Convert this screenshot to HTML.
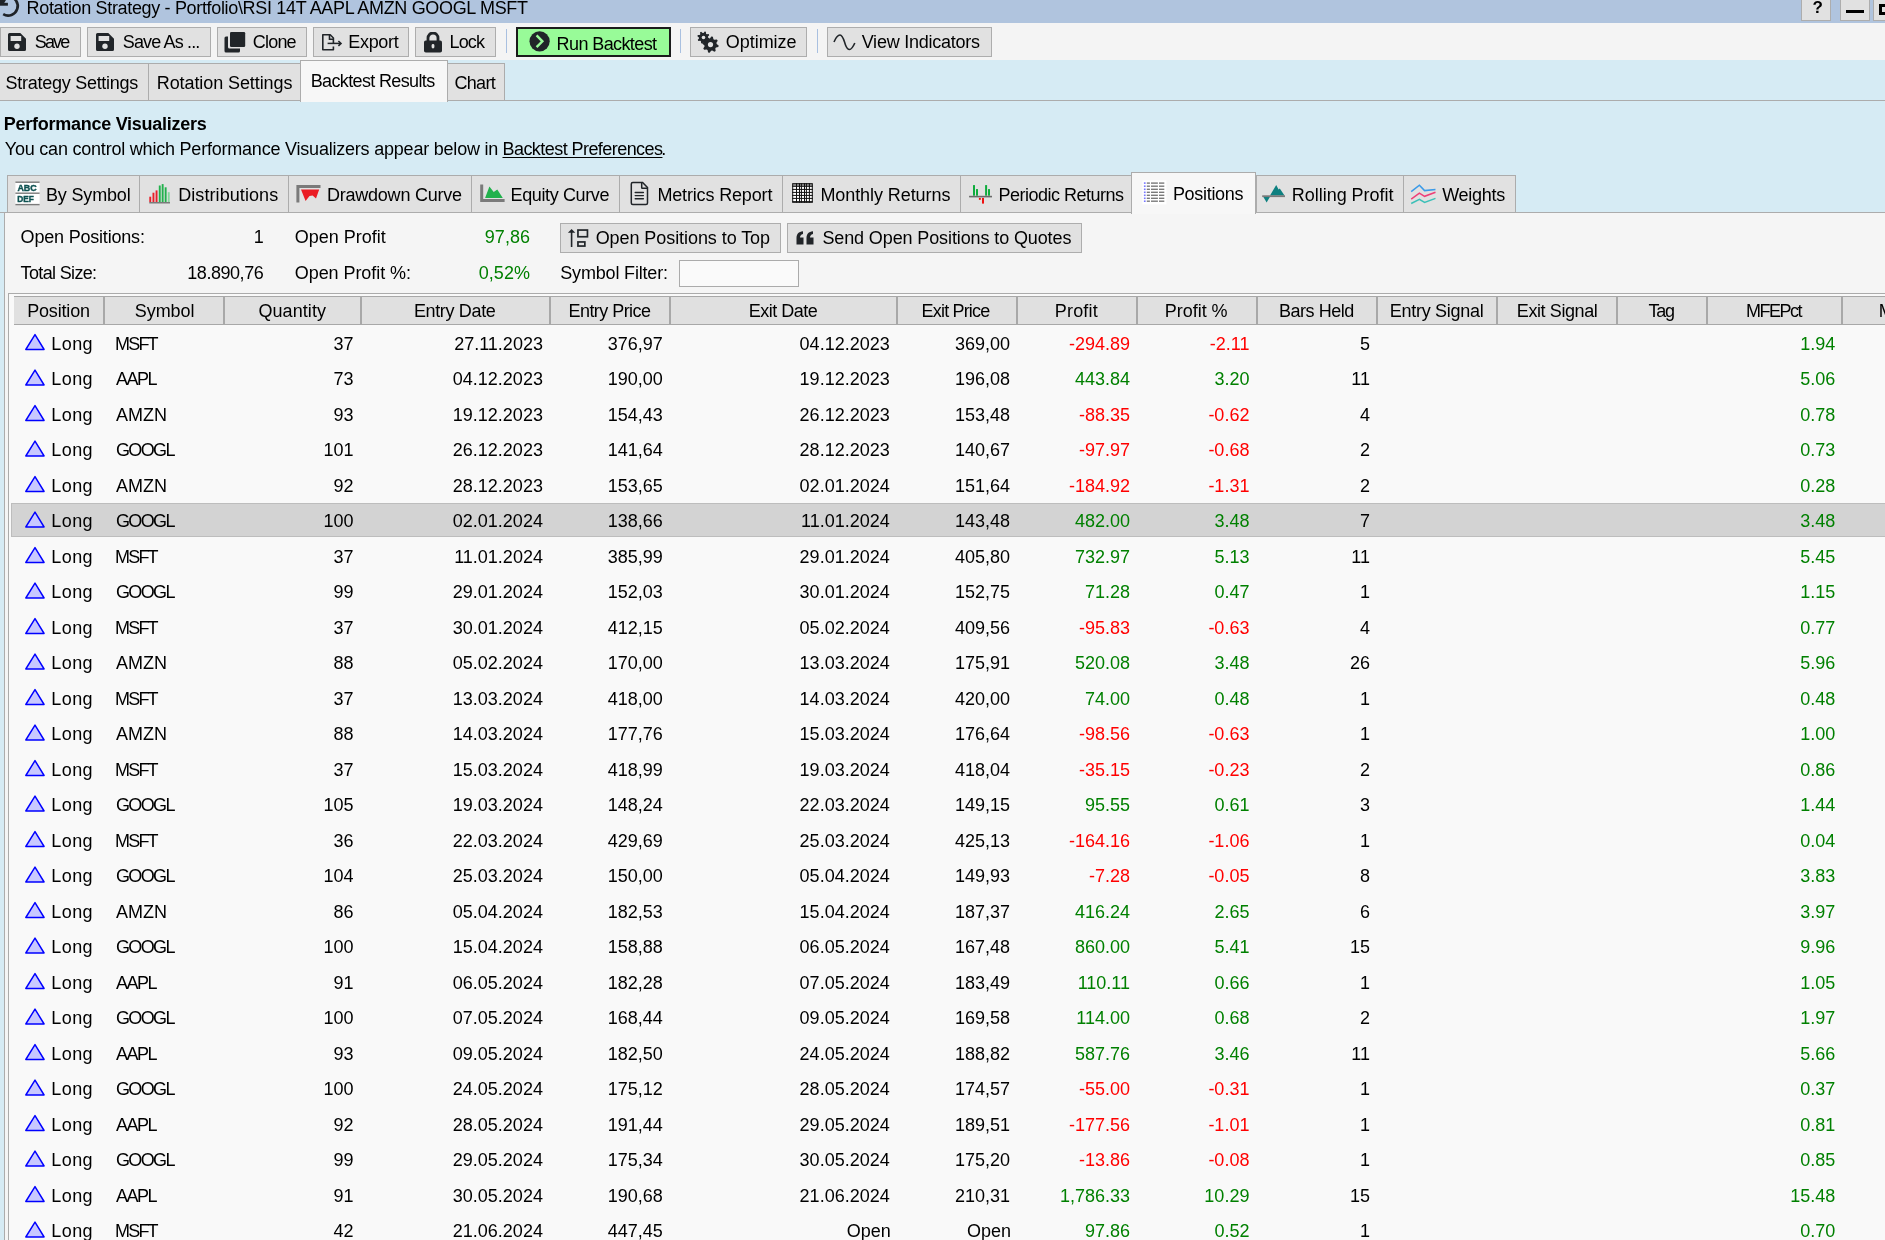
<!DOCTYPE html>
<html><head><meta charset="utf-8"><title>Rotation Strategy</title>
<style>
html,body{margin:0;padding:0;}
body{width:1885px;height:1240px;overflow:hidden;position:relative;font-family:"Liberation Sans", sans-serif;font-size:18px;color:#000;background:#D6EBF4;}
u{text-decoration:underline;text-underline-offset:2px;}
</style></head><body>
<div style="position:absolute;left:0;top:0;width:1885px;height:1240px;will-change:transform">
<div style="position:absolute;left:0px;top:0px;width:1885px;height:23px;background:#B0C4DE"></div>
<svg style="position:absolute;left:0px;top:0px;overflow:visible" width="24" height="23" viewBox="0 0 24 23"><path d="M3.2 14.2 A9.6 9.6 0 1 0 9 -3.6" fill="none" stroke="#1f2328" stroke-width="2.7"/><rect x="0" y="2.8" width="7.9" height="2.9" fill="#1f2328"/><path d="M0 0 H6 L4.2 2.9 H0 Z" fill="#1f2328"/></svg>
<div style="position:absolute;left:1801px;top:-2px;width:30px;height:23px;background:#E1E1E1;border:1px solid #ADADAD;box-sizing:border-box"></div>
<div style="position:absolute;left:1840px;top:-2px;width:30px;height:23px;background:#E1E1E1;border:1px solid #ADADAD;box-sizing:border-box"></div>
<div style="position:absolute;left:1846px;top:10px;width:18px;height:3px;background:#000"></div>
<div style="position:absolute;left:1873px;top:-2px;width:30px;height:23px;background:#E1E1E1;border:1px solid #ADADAD;box-sizing:border-box"></div>
<div style="position:absolute;left:1879px;top:4px;width:12px;height:11px;border:3px solid #000;box-sizing:border-box"></div>
<div style="position:absolute;left:0px;top:23px;width:1885px;height:37px;background:#F4F4F4"></div>
<div style="position:absolute;left:0px;top:27px;width:81px;height:30px;background:#E1E1E1;border:1px solid #ADADAD;box-sizing:border-box"></div>
<div style="position:absolute;left:87px;top:27px;width:124px;height:30px;background:#E1E1E1;border:1px solid #ADADAD;box-sizing:border-box"></div>
<div style="position:absolute;left:217px;top:27px;width:90px;height:30px;background:#E1E1E1;border:1px solid #ADADAD;box-sizing:border-box"></div>
<div style="position:absolute;left:313px;top:27px;width:96px;height:30px;background:#E1E1E1;border:1px solid #ADADAD;box-sizing:border-box"></div>
<div style="position:absolute;left:415px;top:27px;width:81px;height:30px;background:#E1E1E1;border:1px solid #ADADAD;box-sizing:border-box"></div>
<div style="position:absolute;left:516px;top:27px;width:155px;height:30px;background:#98FB98;border:2px solid #1b1b1b;box-sizing:border-box"></div>
<div style="position:absolute;left:690px;top:27px;width:117px;height:30px;background:#E1E1E1;border:1px solid #ADADAD;box-sizing:border-box"></div>
<div style="position:absolute;left:827px;top:27px;width:165px;height:30px;background:#E1E1E1;border:1px solid #ADADAD;box-sizing:border-box"></div>
<div style="position:absolute;left:506px;top:29px;width:1px;height:24px;background:#A9C0E0"></div>
<div style="position:absolute;left:680px;top:29px;width:1px;height:24px;background:#A9C0E0"></div>
<div style="position:absolute;left:817px;top:29px;width:1px;height:24px;background:#A9C0E0"></div>
<svg style="position:absolute;left:8px;top:33px" width="18" height="18" viewBox="0 0 18 18"><path d="M1.5 0 H12.3 L18 5.7 V16.5 A1.5 1.5 0 0 1 16.5 18 H1.5 A1.5 1.5 0 0 1 0 16.5 V1.5 A1.5 1.5 0 0 1 1.5 0 Z" fill="#212529"/><rect x="2.6" y="3" width="10.6" height="5" fill="#E1E1E1"/><circle cx="9" cy="13.2" r="2.7" fill="#E1E1E1"/></svg>
<svg style="position:absolute;left:96px;top:33px" width="18" height="18" viewBox="0 0 18 18"><path d="M1.5 0 H12.3 L18 5.7 V16.5 A1.5 1.5 0 0 1 16.5 18 H1.5 A1.5 1.5 0 0 1 0 16.5 V1.5 A1.5 1.5 0 0 1 1.5 0 Z" fill="#212529"/><rect x="2.6" y="3" width="10.6" height="5" fill="#E1E1E1"/><circle cx="9" cy="13.2" r="2.7" fill="#E1E1E1"/></svg>
<svg style="position:absolute;left:224px;top:31px" width="22" height="22" viewBox="0 0 22 22"><path d="M0.5 7 A1.5 1.5 0 0 1 2 5.5 H4 V16 A1.5 1.5 0 0 0 5.5 17.5 H16 V20 A1.5 1.5 0 0 1 14.5 21.5 H2 A1.5 1.5 0 0 1 0.5 20 Z" fill="#212529"/><rect x="6" y="1" width="15.2" height="15" rx="1.3" fill="#212529"/></svg>
<svg style="position:absolute;left:316px;top:30px;overflow:visible" width="30" height="24" viewBox="316 30 30 24"><path d="M333.4 43.2 V38 L330.2 34.8 H322.8 V49.7 H333.4 V46.5" fill="none" stroke="#212529" stroke-width="1.6" stroke-linejoin="round"/><path d="M329.5 34.8 V39.2 H333.4" fill="none" stroke="#212529" stroke-width="1.6"/><path d="M327.6 43.4 H340" stroke="#212529" stroke-width="1.5"/><path d="M338.4 41 L341 43.4 L338.4 45.8" fill="none" stroke="#212529" stroke-width="1.6"/></svg>
<svg style="position:absolute;left:423px;top:32px" width="20" height="21" viewBox="0 0 20 21"><path d="M5 9 V6 A5 5 0 0 1 15 6 V9" fill="none" stroke="#212529" stroke-width="2.8"/><rect x="1" y="8.5" width="18" height="12" rx="1.8" fill="#212529"/><rect x="8.6" y="12" width="2.8" height="4.5" rx="1.4" fill="#E1E1E1"/></svg>
<svg style="position:absolute;left:529px;top:31px" width="22" height="22" viewBox="0 0 22 22"><circle cx="10.6" cy="10.3" r="10.1" fill="#212529"/><path d="M7.6 4.4 L13.4 10.3 L7.6 16.2" fill="none" stroke="#98FB98" stroke-width="2.4"/></svg>
<svg style="position:absolute;left:697px;top:31px" width="23" height="22" viewBox="0 0 23 22"><polygon points="12.58,7.73 12.22,8.89 10.32,9.07 9.74,9.76 9.93,11.67 8.85,12.24 7.38,11.01 6.48,11.10 5.27,12.58 4.11,12.22 3.93,10.32 3.24,9.74 1.33,9.93 0.76,8.85 1.99,7.38 1.90,6.48 0.42,5.27 0.78,4.11 2.68,3.93 3.26,3.24 3.07,1.33 4.15,0.76 5.62,1.99 6.52,1.90 7.73,0.42 8.89,0.78 9.07,2.68 9.76,3.26 11.67,3.07 12.24,4.15 11.01,5.62 11.10,6.52" fill="#212529"/><circle cx="6.5" cy="6.5" r="1.8" fill="#E1E1E1"/><polygon points="21.66,14.42 21.34,15.99 18.96,16.53 18.29,17.54 18.69,19.95 17.35,20.84 15.29,19.54 14.10,19.77 12.68,21.76 11.11,21.44 10.57,19.06 9.56,18.39 7.15,18.79 6.26,17.45 7.56,15.39 7.33,14.20 5.34,12.78 5.66,11.21 8.04,10.67 8.71,9.66 8.31,7.25 9.65,6.36 11.71,7.66 12.90,7.43 14.32,5.44 15.89,5.76 16.43,8.14 17.44,8.81 19.85,8.41 20.74,9.75 19.44,11.81 19.67,13.00" fill="#212529"/><circle cx="13.5" cy="13.6" r="2.6" fill="#E1E1E1"/></svg>
<svg style="position:absolute;left:833px;top:33px" width="24" height="18" viewBox="0 0 24 18"><path d="M1 9 C3 4, 5 2, 7 2 C10 2, 11 8, 12.5 12 C14 16, 15 16.5, 16.5 16.5 C18.5 16.5, 20 14, 21.8 10" fill="none" stroke="#212529" stroke-width="1.6"/></svg>
<div style="position:absolute;left:0px;top:60px;width:1885px;height:1180px;background:#D6EBF4"></div>
<div style="position:absolute;left:0px;top:100px;width:1885px;height:1px;background:#ACACAC"></div>
<div style="position:absolute;left:-1px;top:63px;width:150px;height:38px;background:#E1E1E1;border:1px solid #ACACAC;border-bottom:1px solid #ACACAC;box-sizing:border-box"></div>
<div style="position:absolute;left:148px;top:63px;width:153px;height:38px;background:#E1E1E1;border:1px solid #ACACAC;border-bottom:1px solid #ACACAC;box-sizing:border-box"></div>
<div style="position:absolute;left:447px;top:63px;width:58px;height:38px;background:#E1E1E1;border:1px solid #ACACAC;border-bottom:1px solid #ACACAC;box-sizing:border-box"></div>
<div style="position:absolute;left:300px;top:60px;width:148px;height:42px;background:#F7F7F7;border:1px solid #ACACAC;border-bottom:none;box-sizing:border-box"></div>
<div style="position:absolute;left:0px;top:212px;width:1885px;height:1px;background:#ACACAC"></div>
<div style="position:absolute;left:7px;top:175px;width:133px;height:38px;background:#E1E1E1;border:1px solid #ACACAC;border-bottom:1px solid #ACACAC;box-sizing:border-box"></div>
<div style="position:absolute;left:139px;top:175px;width:150px;height:38px;background:#E1E1E1;border:1px solid #ACACAC;border-bottom:1px solid #ACACAC;box-sizing:border-box"></div>
<div style="position:absolute;left:288px;top:175px;width:184px;height:38px;background:#E1E1E1;border:1px solid #ACACAC;border-bottom:1px solid #ACACAC;box-sizing:border-box"></div>
<div style="position:absolute;left:471px;top:175px;width:149px;height:38px;background:#E1E1E1;border:1px solid #ACACAC;border-bottom:1px solid #ACACAC;box-sizing:border-box"></div>
<div style="position:absolute;left:619px;top:175px;width:164px;height:38px;background:#E1E1E1;border:1px solid #ACACAC;border-bottom:1px solid #ACACAC;box-sizing:border-box"></div>
<div style="position:absolute;left:782px;top:175px;width:179px;height:38px;background:#E1E1E1;border:1px solid #ACACAC;border-bottom:1px solid #ACACAC;box-sizing:border-box"></div>
<div style="position:absolute;left:960px;top:175px;width:172px;height:38px;background:#E1E1E1;border:1px solid #ACACAC;border-bottom:1px solid #ACACAC;box-sizing:border-box"></div>
<div style="position:absolute;left:1256px;top:175px;width:148px;height:38px;background:#E1E1E1;border:1px solid #ACACAC;border-bottom:1px solid #ACACAC;box-sizing:border-box"></div>
<div style="position:absolute;left:1403px;top:175px;width:113px;height:38px;background:#E1E1E1;border:1px solid #ACACAC;border-bottom:1px solid #ACACAC;box-sizing:border-box"></div>
<div style="position:absolute;left:4px;top:212px;width:1881px;height:1028px;background:#F5F5F5;border-left:1px solid #ACACAC;border-top:1px solid #ACACAC;box-sizing:border-box"></div>
<div style="position:absolute;left:1131px;top:172px;width:125px;height:42px;background:#F7F7F7;border:1px solid #ACACAC;border-bottom:none;box-sizing:border-box"></div>
<svg style="position:absolute;left:12px;top:178px;overflow:visible" width="30" height="30" viewBox="12 178 30 30"><rect x="15.4" y="182.2" width="24.2" height="22.4" fill="#fff"/><rect x="15.4" y="181.5" width="24.2" height="1.4" fill="#7a7a7a"/><rect x="15.4" y="192.5" width="24.2" height="1.4" fill="#7a7a7a"/><rect x="15.4" y="203.9" width="24.2" height="1.4" fill="#7a7a7a"/><text x="17.4" y="191.4" textLength="19.3" lengthAdjust="spacingAndGlyphs" font-family="Liberation Sans" font-weight="bold" font-size="9.8" fill="#0f5252" stroke="#0f5252" stroke-width="0.45">ABC</text><text x="17.3" y="201.9" textLength="16.6" lengthAdjust="spacingAndGlyphs" font-family="Liberation Sans" font-weight="bold" font-size="9.8" fill="#0f5252" stroke="#0f5252" stroke-width="0.45">DEF</text></svg>
<svg style="position:absolute;left:145px;top:180px;overflow:visible" width="30" height="28" viewBox="145 180 30 28"><rect x="149.3" y="196.7" width="1.9" height="5.5" fill="#e8202a"/><rect x="152.5" y="192.7" width="1.9" height="9.5" fill="#e8202a"/><rect x="155.6" y="190.4" width="1.9" height="11.8" fill="#e8202a"/><rect x="158.8" y="185.5" width="1.9" height="16.7" fill="#22b14c"/><rect x="161.7" y="184.1" width="1.9" height="18.1" fill="#22b14c"/><rect x="164.7" y="187.3" width="1.9" height="14.9" fill="#22b14c"/><rect x="167.8" y="192.2" width="1.9" height="10.0" fill="#86d69c"/><rect x="149.3" y="202" width="20.7" height="1.5" fill="#7a7a7a"/></svg>
<svg style="position:absolute;left:293px;top:182px;overflow:visible" width="30" height="24" viewBox="293 182 30 24"><path d="M297.9 202.6 V186.6 H320.5" fill="none" stroke="#7a7a7a" stroke-width="3"/><path d="M301 189.6 H319.2 L316 198.6 L312.6 195.6 L309.5 196 L305.6 201 Z" fill="#ea1c24"/></svg>
<svg style="position:absolute;left:478px;top:182px;overflow:visible" width="30" height="24" viewBox="478 182 30 24"><path d="M481.7 184.5 V200.4 H504.6" fill="none" stroke="#7a7a7a" stroke-width="3"/><path d="M485.1 198 L489.4 186.4 L493.7 191.9 L497.3 189.4 L502.8 198 Z" fill="#22b14c"/></svg>
<svg style="position:absolute;left:626px;top:178px;overflow:visible" width="30" height="30" viewBox="626 178 30 30"><path d="M632.8 182.4 H642.6 L647.5 187.6 V202.9 A1.5 1.5 0 0 1 646 204.4 H632.8 A1.5 1.5 0 0 1 631.3 202.9 V183.9 A1.5 1.5 0 0 1 632.8 182.4 Z" fill="none" stroke="#212529" stroke-width="1.5"/><path d="M641.7 182.4 V187.8 A0.5 0.5 0 0 0 642.2 188.3 H647.5" fill="none" stroke="#212529" stroke-width="1.5"/><path d="M635.2 192.5 H643.4 M635.2 195.6 H643.4 M635.2 198.7 H643.4" stroke="#212529" stroke-width="1.4" stroke-linecap="round"/></svg>
<svg style="position:absolute;left:788px;top:178px;overflow:visible" width="30" height="30" viewBox="788 178 30 30"><rect x="792.2" y="183.2" width="20.6" height="19.4" fill="#fff"/><rect x="792.2" y="183.2" width="20.6" height="3.2" fill="#9a9a9a"/><rect x="796.0" y="183.2" width="1" height="19.4" fill="#111"/><rect x="799.0" y="183.2" width="1" height="19.4" fill="#111"/><rect x="800.9" y="183.2" width="1" height="19.4" fill="#111"/><rect x="804.0" y="183.2" width="1" height="19.4" fill="#111"/><rect x="805.9" y="183.2" width="1" height="19.4" fill="#111"/><rect x="808.9" y="183.2" width="1" height="19.4" fill="#111"/><rect x="792.2" y="185.8" width="20.6" height="1" fill="#111"/><rect x="792.2" y="188.9" width="20.6" height="1" fill="#111"/><rect x="792.2" y="191.9" width="20.6" height="1" fill="#111"/><rect x="792.2" y="194.9" width="20.6" height="1" fill="#111"/><rect x="792.2" y="197.9" width="20.6" height="1" fill="#111"/><rect x="792.7" y="183.7" width="19.6" height="18.4" fill="none" stroke="#111" stroke-width="1"/><rect x="792.2" y="201.2" width="20.6" height="1.4" fill="#111"/></svg>
<svg style="position:absolute;left:966px;top:180px;overflow:visible" width="30" height="30" viewBox="966 180 30 30"><rect x="973" y="185.1" width="2" height="10.6" fill="#0eac3c"/><rect x="976" y="189.1" width="2" height="6.6" fill="#0eac3c"/><rect x="985.1" y="185.1" width="2" height="10.6" fill="#0eac3c"/><rect x="988" y="189.1" width="2" height="6.6" fill="#0eac3c"/><rect x="969.1" y="195.8" width="22.9" height="1.6" fill="#6a6a6a"/><rect x="978.9" y="197.9" width="1.9" height="1.9" fill="#ee1111"/><rect x="982" y="197.9" width="2" height="5.7" fill="#ee1111"/></svg>
<svg style="position:absolute;left:1140px;top:178px;overflow:visible" width="30" height="30" viewBox="1140 178 30 30"><rect x="1142.4" y="180.4" width="24" height="24" fill="#fff"/><rect x="1143.9" y="182.3" width="1.7" height="1.6" fill="#7777ff"/><rect x="1146.8" y="182.4" width="3.1" height="1.4" fill="#7a7a7a"/><rect x="1151" y="182.4" width="6.9" height="1.4" fill="#7a7a7a"/><rect x="1159" y="182.4" width="5.3" height="1.4" fill="#7a7a7a"/><rect x="1143.9" y="185.4" width="1.7" height="1.6" fill="#7777ff"/><rect x="1146.8" y="185.5" width="3.1" height="1.4" fill="#7a7a7a"/><rect x="1151" y="185.5" width="6.9" height="1.4" fill="#7a7a7a"/><rect x="1159" y="185.5" width="5.3" height="1.4" fill="#7a7a7a"/><rect x="1143.9" y="188.5" width="1.7" height="1.6" fill="#7777ff"/><rect x="1146.8" y="188.6" width="3.1" height="1.4" fill="#7a7a7a"/><rect x="1151" y="188.6" width="6.9" height="1.4" fill="#7a7a7a"/><rect x="1159" y="188.6" width="5.3" height="1.4" fill="#7a7a7a"/><rect x="1143.9" y="191.5" width="1.7" height="1.6" fill="#7777ff"/><rect x="1146.8" y="191.6" width="3.1" height="1.4" fill="#7a7a7a"/><rect x="1151" y="191.6" width="6.9" height="1.4" fill="#7a7a7a"/><rect x="1159" y="191.6" width="5.3" height="1.4" fill="#7a7a7a"/><rect x="1143.9" y="194.5" width="1.7" height="1.6" fill="#7777ff"/><rect x="1146.8" y="194.6" width="3.1" height="1.4" fill="#7a7a7a"/><rect x="1151" y="194.6" width="6.9" height="1.4" fill="#7a7a7a"/><rect x="1159" y="194.6" width="5.3" height="1.4" fill="#7a7a7a"/><rect x="1143.9" y="197.5" width="1.7" height="1.6" fill="#7777ff"/><rect x="1146.8" y="197.6" width="3.1" height="1.4" fill="#7a7a7a"/><rect x="1151" y="197.6" width="6.9" height="1.4" fill="#7a7a7a"/><rect x="1159" y="197.6" width="5.3" height="1.4" fill="#7a7a7a"/><rect x="1143.9" y="200.4" width="1.7" height="1.6" fill="#7777ff"/><rect x="1146.8" y="200.5" width="3.1" height="1.4" fill="#7a7a7a"/><rect x="1151" y="200.5" width="6.9" height="1.4" fill="#7a7a7a"/><rect x="1159" y="200.5" width="5.3" height="1.4" fill="#7a7a7a"/></svg>
<svg style="position:absolute;left:1258px;top:180px;overflow:visible" width="32" height="26" viewBox="1258 180 32 26"><path d="M1270 195.6 L1276.2 184.9 L1278.6 189.5 L1279.8 188.4 L1284.5 195.6 Z" fill="#0e8080"/><path d="M1263.3 196.8 H1270 L1266.6 202.5 Z" fill="#0e8080"/><rect x="1262.2" y="195.3" width="22.8" height="1.8" fill="#7a7a7a"/></svg>
<svg style="position:absolute;left:1408px;top:180px;overflow:visible" width="32" height="28" viewBox="1408 180 32 28"><path d="M1411.2 191.6 L1419.4 185.2 L1424.6 190.6 L1435.5 189.6" fill="none" stroke="#3a9ae8" stroke-width="1.5"/><path d="M1411.2 199.1 L1419.4 193.2 L1424.6 196.3 L1435.5 192.2" fill="none" stroke="#ee3f78" stroke-width="1.5"/><path d="M1411.2 203.5 L1419.4 199.4 L1424.6 202.5 L1435.5 198.4" fill="none" stroke="#3cc0b8" stroke-width="1.5"/></svg>
<div style="position:absolute;left:560px;top:223px;width:221px;height:30px;background:#E1E1E1;border:1px solid #ADADAD;box-sizing:border-box"></div>
<div style="position:absolute;left:787px;top:223px;width:295px;height:30px;background:#E1E1E1;border:1px solid #ADADAD;box-sizing:border-box"></div>
<svg style="position:absolute;left:562px;top:224px;overflow:visible" width="30" height="28" viewBox="562 224 30 28"><path d="M571.6 232 V247" stroke="#212529" stroke-width="1.6"/><path d="M567.9 232.8 L571.6 228.9 L575.3 232.8 Z" fill="#212529"/><rect x="577.95" y="230.05" width="9.5" height="6.7" fill="none" stroke="#212529" stroke-width="1.7"/><rect x="577.95" y="241.95" width="6.9" height="4.1" fill="none" stroke="#212529" stroke-width="1.7"/></svg>
<svg style="position:absolute;left:796px;top:231px" width="20" height="14" viewBox="0 0 20 14"><path d="M0.5 13.5 V7 C0.5 3, 2.5 0.8, 7 0.2 V3 C4.8 3.6, 4 5, 4 6.5 H7.5 V13.5 Z" fill="#212529"/><path d="M10.5 13.5 V7 C10.5 3, 12.5 0.8, 17 0.2 V3 C14.8 3.6, 14 5, 14 6.5 H17.5 V13.5 Z" fill="#212529"/></svg>
<div style="position:absolute;left:679px;top:259.5px;width:120px;height:27.5px;background:#FAFAFA;border:1px solid #ABABAB;box-sizing:border-box"></div>
<div style="position:absolute;left:8px;top:293px;width:1877px;height:947px;background:#F9F9F9;border-left:1px solid #ABABAB;border-top:1px solid #ABABAB;box-sizing:border-box"></div>
<div style="position:absolute;left:14px;top:296px;width:1871px;height:29px;background:#E0E0E0;border-top:1px solid #A8A8A8;border-bottom:1px solid #A8A8A8;box-sizing:border-box"></div>
<div style="position:absolute;left:103px;top:297px;width:2px;height:27px;background:#A8A8A8"></div>
<div style="position:absolute;left:223px;top:297px;width:2px;height:27px;background:#A8A8A8"></div>
<div style="position:absolute;left:360px;top:297px;width:2px;height:27px;background:#A8A8A8"></div>
<div style="position:absolute;left:549px;top:297px;width:2px;height:27px;background:#A8A8A8"></div>
<div style="position:absolute;left:669px;top:297px;width:2px;height:27px;background:#A8A8A8"></div>
<div style="position:absolute;left:896px;top:297px;width:2px;height:27px;background:#A8A8A8"></div>
<div style="position:absolute;left:1016px;top:297px;width:2px;height:27px;background:#A8A8A8"></div>
<div style="position:absolute;left:1136px;top:297px;width:2px;height:27px;background:#A8A8A8"></div>
<div style="position:absolute;left:1256px;top:297px;width:2px;height:27px;background:#A8A8A8"></div>
<div style="position:absolute;left:1376px;top:297px;width:2px;height:27px;background:#A8A8A8"></div>
<div style="position:absolute;left:1496px;top:297px;width:2px;height:27px;background:#A8A8A8"></div>
<div style="position:absolute;left:1616px;top:297px;width:2px;height:27px;background:#A8A8A8"></div>
<div style="position:absolute;left:1706px;top:297px;width:2px;height:27px;background:#A8A8A8"></div>
<div style="position:absolute;left:1841px;top:297px;width:2px;height:27px;background:#A8A8A8"></div>
<div style="position:absolute;left:11px;top:503px;width:1874px;height:34px;background:#D3D3D3;border:1px solid #BDBDBD;border-right:none;box-sizing:border-box"></div>
<svg style="position:absolute;left:22px;top:331px;overflow:visible" width="26" height="22" viewBox="22 331 26 22"><path d="M35 334.60 L44.1 349.50 H25.8 Z" fill="#C8C8FF" stroke="#0000FF" stroke-width="1.45" stroke-linejoin="round"/></svg>
<svg style="position:absolute;left:22px;top:366px;overflow:visible" width="26" height="22" viewBox="22 366 26 22"><path d="M35 370.10 L44.1 385.00 H25.8 Z" fill="#C8C8FF" stroke="#0000FF" stroke-width="1.45" stroke-linejoin="round"/></svg>
<svg style="position:absolute;left:22px;top:402px;overflow:visible" width="26" height="22" viewBox="22 402 26 22"><path d="M35 405.60 L44.1 420.50 H25.8 Z" fill="#C8C8FF" stroke="#0000FF" stroke-width="1.45" stroke-linejoin="round"/></svg>
<svg style="position:absolute;left:22px;top:437px;overflow:visible" width="26" height="22" viewBox="22 437 26 22"><path d="M35 441.10 L44.1 456.00 H25.8 Z" fill="#C8C8FF" stroke="#0000FF" stroke-width="1.45" stroke-linejoin="round"/></svg>
<svg style="position:absolute;left:22px;top:473px;overflow:visible" width="26" height="22" viewBox="22 473 26 22"><path d="M35 476.60 L44.1 491.50 H25.8 Z" fill="#C8C8FF" stroke="#0000FF" stroke-width="1.45" stroke-linejoin="round"/></svg>
<svg style="position:absolute;left:22px;top:508px;overflow:visible" width="26" height="22" viewBox="22 508 26 22"><path d="M35 512.10 L44.1 527.00 H25.8 Z" fill="#C8C8FF" stroke="#0000FF" stroke-width="1.45" stroke-linejoin="round"/></svg>
<svg style="position:absolute;left:22px;top:544px;overflow:visible" width="26" height="22" viewBox="22 544 26 22"><path d="M35 547.60 L44.1 562.50 H25.8 Z" fill="#C8C8FF" stroke="#0000FF" stroke-width="1.45" stroke-linejoin="round"/></svg>
<svg style="position:absolute;left:22px;top:579px;overflow:visible" width="26" height="22" viewBox="22 579 26 22"><path d="M35 583.10 L44.1 598.00 H25.8 Z" fill="#C8C8FF" stroke="#0000FF" stroke-width="1.45" stroke-linejoin="round"/></svg>
<svg style="position:absolute;left:22px;top:615px;overflow:visible" width="26" height="22" viewBox="22 615 26 22"><path d="M35 618.60 L44.1 633.50 H25.8 Z" fill="#C8C8FF" stroke="#0000FF" stroke-width="1.45" stroke-linejoin="round"/></svg>
<svg style="position:absolute;left:22px;top:650px;overflow:visible" width="26" height="22" viewBox="22 650 26 22"><path d="M35 654.10 L44.1 669.00 H25.8 Z" fill="#C8C8FF" stroke="#0000FF" stroke-width="1.45" stroke-linejoin="round"/></svg>
<svg style="position:absolute;left:22px;top:686px;overflow:visible" width="26" height="22" viewBox="22 686 26 22"><path d="M35 689.60 L44.1 704.50 H25.8 Z" fill="#C8C8FF" stroke="#0000FF" stroke-width="1.45" stroke-linejoin="round"/></svg>
<svg style="position:absolute;left:22px;top:721px;overflow:visible" width="26" height="22" viewBox="22 721 26 22"><path d="M35 725.10 L44.1 740.00 H25.8 Z" fill="#C8C8FF" stroke="#0000FF" stroke-width="1.45" stroke-linejoin="round"/></svg>
<svg style="position:absolute;left:22px;top:757px;overflow:visible" width="26" height="22" viewBox="22 757 26 22"><path d="M35 760.60 L44.1 775.50 H25.8 Z" fill="#C8C8FF" stroke="#0000FF" stroke-width="1.45" stroke-linejoin="round"/></svg>
<svg style="position:absolute;left:22px;top:792px;overflow:visible" width="26" height="22" viewBox="22 792 26 22"><path d="M35 796.10 L44.1 811.00 H25.8 Z" fill="#C8C8FF" stroke="#0000FF" stroke-width="1.45" stroke-linejoin="round"/></svg>
<svg style="position:absolute;left:22px;top:828px;overflow:visible" width="26" height="22" viewBox="22 828 26 22"><path d="M35 831.60 L44.1 846.50 H25.8 Z" fill="#C8C8FF" stroke="#0000FF" stroke-width="1.45" stroke-linejoin="round"/></svg>
<svg style="position:absolute;left:22px;top:863px;overflow:visible" width="26" height="22" viewBox="22 863 26 22"><path d="M35 867.10 L44.1 882.00 H25.8 Z" fill="#C8C8FF" stroke="#0000FF" stroke-width="1.45" stroke-linejoin="round"/></svg>
<svg style="position:absolute;left:22px;top:899px;overflow:visible" width="26" height="22" viewBox="22 899 26 22"><path d="M35 902.60 L44.1 917.50 H25.8 Z" fill="#C8C8FF" stroke="#0000FF" stroke-width="1.45" stroke-linejoin="round"/></svg>
<svg style="position:absolute;left:22px;top:934px;overflow:visible" width="26" height="22" viewBox="22 934 26 22"><path d="M35 938.10 L44.1 953.00 H25.8 Z" fill="#C8C8FF" stroke="#0000FF" stroke-width="1.45" stroke-linejoin="round"/></svg>
<svg style="position:absolute;left:22px;top:970px;overflow:visible" width="26" height="22" viewBox="22 970 26 22"><path d="M35 973.60 L44.1 988.50 H25.8 Z" fill="#C8C8FF" stroke="#0000FF" stroke-width="1.45" stroke-linejoin="round"/></svg>
<svg style="position:absolute;left:22px;top:1005px;overflow:visible" width="26" height="22" viewBox="22 1005 26 22"><path d="M35 1009.10 L44.1 1024.00 H25.8 Z" fill="#C8C8FF" stroke="#0000FF" stroke-width="1.45" stroke-linejoin="round"/></svg>
<svg style="position:absolute;left:22px;top:1041px;overflow:visible" width="26" height="22" viewBox="22 1041 26 22"><path d="M35 1044.60 L44.1 1059.50 H25.8 Z" fill="#C8C8FF" stroke="#0000FF" stroke-width="1.45" stroke-linejoin="round"/></svg>
<svg style="position:absolute;left:22px;top:1076px;overflow:visible" width="26" height="22" viewBox="22 1076 26 22"><path d="M35 1080.10 L44.1 1095.00 H25.8 Z" fill="#C8C8FF" stroke="#0000FF" stroke-width="1.45" stroke-linejoin="round"/></svg>
<svg style="position:absolute;left:22px;top:1112px;overflow:visible" width="26" height="22" viewBox="22 1112 26 22"><path d="M35 1115.60 L44.1 1130.50 H25.8 Z" fill="#C8C8FF" stroke="#0000FF" stroke-width="1.45" stroke-linejoin="round"/></svg>
<svg style="position:absolute;left:22px;top:1147px;overflow:visible" width="26" height="22" viewBox="22 1147 26 22"><path d="M35 1151.10 L44.1 1166.00 H25.8 Z" fill="#C8C8FF" stroke="#0000FF" stroke-width="1.45" stroke-linejoin="round"/></svg>
<svg style="position:absolute;left:22px;top:1183px;overflow:visible" width="26" height="22" viewBox="22 1183 26 22"><path d="M35 1186.60 L44.1 1201.50 H25.8 Z" fill="#C8C8FF" stroke="#0000FF" stroke-width="1.45" stroke-linejoin="round"/></svg>
<svg style="position:absolute;left:22px;top:1218px;overflow:visible" width="26" height="22" viewBox="22 1218 26 22"><path d="M35 1222.10 L44.1 1237.00 H25.8 Z" fill="#C8C8FF" stroke="#0000FF" stroke-width="1.45" stroke-linejoin="round"/></svg>
<div style="position:absolute;top:-2.20px;white-space:pre;line-height:20.00px;color:#000;letter-spacing:-0.336px;left:26.60px;">Rotation Strategy - Portfolio\RSI 14T AAPL AMZN GOOGL MSFT</div>
<div style="position:absolute;top:-1.21px;white-space:pre;line-height:18.89px;color:#000;font-size:17px;font-weight:bold;left:1812.50px;">?</div>
<div style="position:absolute;top:32.00px;white-space:pre;line-height:20.00px;color:#000;letter-spacing:-1.872px;left:34.80px;">Save</div>
<div style="position:absolute;top:32.00px;white-space:pre;line-height:20.00px;color:#000;letter-spacing:-0.854px;left:122.80px;">Save As ...</div>
<div style="position:absolute;top:32.00px;white-space:pre;line-height:20.00px;color:#000;letter-spacing:-0.805px;left:252.80px;">Clone</div>
<div style="position:absolute;top:32.00px;white-space:pre;line-height:20.00px;color:#000;letter-spacing:-0.324px;left:348.30px;">Export</div>
<div style="position:absolute;top:32.00px;white-space:pre;line-height:20.00px;color:#000;letter-spacing:-0.907px;left:449.60px;">Lock</div>
<div style="position:absolute;top:33.70px;white-space:pre;line-height:20.00px;color:#000;letter-spacing:-0.595px;left:556.60px;">Run Backtest</div>
<div style="position:absolute;top:32.00px;white-space:pre;line-height:20.00px;color:#000;letter-spacing:-0.044px;left:725.80px;">Optimize</div>
<div style="position:absolute;top:32.00px;white-space:pre;line-height:20.00px;color:#000;letter-spacing:-0.245px;left:861.70px;">View Indicators</div>
<div style="position:absolute;top:72.70px;white-space:pre;line-height:20.00px;color:#000;letter-spacing:-0.273px;left:5.60px;">Strategy Settings</div>
<div style="position:absolute;top:72.80px;white-space:pre;line-height:20.00px;color:#000;letter-spacing:-0.093px;left:156.80px;">Rotation Settings</div>
<div style="position:absolute;top:71.10px;white-space:pre;line-height:20.00px;color:#000;letter-spacing:-0.637px;left:310.70px;">Backtest Results</div>
<div style="position:absolute;top:72.80px;white-space:pre;line-height:20.00px;color:#000;letter-spacing:-0.654px;left:454.40px;">Chart</div>
<div style="position:absolute;top:113.70px;white-space:pre;line-height:20.00px;color:#000;font-weight:bold;letter-spacing:-0.262px;left:3.80px;">Performance Visualizers</div>
<div style="position:absolute;top:138.90px;white-space:pre;line-height:20.00px;color:#000;letter-spacing:-0.213px;left:4.80px;">You can control which Performance Visualizers appear below in</div>
<div style="position:absolute;top:138.90px;white-space:pre;line-height:20.00px;color:#000;letter-spacing:-0.557px;left:502.50px;"><u>Backtest Preferences</u></div>
<div style="position:absolute;top:138.90px;white-space:pre;line-height:20.00px;color:#000;left:661.30px;">.</div>
<div style="position:absolute;top:185.00px;white-space:pre;line-height:20.00px;color:#000;letter-spacing:-0.154px;left:45.90px;">By Symbol</div>
<div style="position:absolute;top:185.00px;white-space:pre;line-height:20.00px;color:#000;letter-spacing:0.080px;left:178.20px;">Distributions</div>
<div style="position:absolute;top:185.00px;white-space:pre;line-height:20.00px;color:#000;letter-spacing:-0.234px;left:327.00px;">Drawdown Curve</div>
<div style="position:absolute;top:185.00px;white-space:pre;line-height:20.00px;color:#000;letter-spacing:-0.367px;left:510.50px;">Equity Curve</div>
<div style="position:absolute;top:185.00px;white-space:pre;line-height:20.00px;color:#000;letter-spacing:-0.156px;left:657.40px;">Metrics Report</div>
<div style="position:absolute;top:185.00px;white-space:pre;line-height:20.00px;color:#000;letter-spacing:-0.075px;left:820.40px;">Monthly Returns</div>
<div style="position:absolute;top:185.00px;white-space:pre;line-height:20.00px;color:#000;letter-spacing:-0.504px;left:998.40px;">Periodic Returns</div>
<div style="position:absolute;top:185.00px;white-space:pre;line-height:20.00px;color:#000;letter-spacing:-0.026px;left:1291.80px;">Rolling Profit</div>
<div style="position:absolute;top:185.00px;white-space:pre;line-height:20.00px;color:#000;letter-spacing:-0.283px;left:1442.20px;">Weights</div>
<div style="position:absolute;top:183.80px;white-space:pre;line-height:20.00px;color:#000;letter-spacing:-0.305px;left:1172.90px;">Positions</div>
<div style="position:absolute;top:226.60px;white-space:pre;line-height:20.00px;color:#000;letter-spacing:-0.198px;left:20.60px;">Open Positions:</div>
<div style="position:absolute;top:226.60px;white-space:pre;line-height:20.00px;color:#000;left:253.70px;">1</div>
<div style="position:absolute;top:226.60px;white-space:pre;line-height:20.00px;color:#000;letter-spacing:-0.014px;left:294.80px;">Open Profit</div>
<div style="position:absolute;top:226.60px;white-space:pre;line-height:20.00px;color:#008000;left:484.87px;">97,86</div>
<div style="position:absolute;top:262.70px;white-space:pre;line-height:20.00px;color:#000;letter-spacing:-0.654px;left:20.60px;">Total Size:</div>
<div style="position:absolute;top:262.70px;white-space:pre;line-height:20.00px;color:#000;letter-spacing:-0.458px;left:187.30px;">18.890,76</div>
<div style="position:absolute;top:262.70px;white-space:pre;line-height:20.00px;color:#000;letter-spacing:-0.066px;left:294.80px;">Open Profit %:</div>
<div style="position:absolute;top:262.70px;white-space:pre;line-height:20.00px;color:#008000;left:478.87px;">0,52%</div>
<div style="position:absolute;top:228.10px;white-space:pre;line-height:20.00px;color:#000;letter-spacing:-0.070px;left:595.70px;">Open Positions to Top</div>
<div style="position:absolute;top:228.10px;white-space:pre;line-height:20.00px;color:#000;letter-spacing:-0.113px;left:822.40px;">Send Open Positions to Quotes</div>
<div style="position:absolute;top:263.00px;white-space:pre;line-height:20.00px;color:#000;letter-spacing:-0.179px;left:560.30px;">Symbol Filter:</div>
<div style="position:absolute;top:300.90px;white-space:pre;line-height:20.00px;color:#000;letter-spacing:-0.175px;left:27.20px;">Position</div>
<div style="position:absolute;top:300.90px;white-space:pre;line-height:20.00px;color:#000;letter-spacing:-0.064px;left:134.80px;">Symbol</div>
<div style="position:absolute;top:300.90px;white-space:pre;line-height:20.00px;color:#000;letter-spacing:0.081px;left:258.40px;">Quantity</div>
<div style="position:absolute;top:300.90px;white-space:pre;line-height:20.00px;color:#000;letter-spacing:-0.347px;left:413.90px;">Entry Date</div>
<div style="position:absolute;top:300.90px;white-space:pre;line-height:20.00px;color:#000;letter-spacing:-0.551px;left:568.50px;">Entry Price</div>
<div style="position:absolute;top:300.90px;white-space:pre;line-height:20.00px;color:#000;letter-spacing:-0.490px;left:748.70px;">Exit Date</div>
<div style="position:absolute;top:300.90px;white-space:pre;line-height:20.00px;color:#000;letter-spacing:-0.823px;left:921.60px;">Exit Price</div>
<div style="position:absolute;top:300.90px;white-space:pre;line-height:20.00px;color:#000;letter-spacing:0.178px;left:1054.80px;">Profit</div>
<div style="position:absolute;top:300.90px;white-space:pre;line-height:20.00px;color:#000;letter-spacing:-0.030px;left:1164.80px;">Profit %</div>
<div style="position:absolute;top:300.90px;white-space:pre;line-height:20.00px;color:#000;letter-spacing:-0.453px;left:1278.90px;">Bars Held</div>
<div style="position:absolute;top:300.90px;white-space:pre;line-height:20.00px;color:#000;letter-spacing:-0.268px;left:1389.70px;">Entry Signal</div>
<div style="position:absolute;top:300.90px;white-space:pre;line-height:20.00px;color:#000;letter-spacing:-0.404px;left:1516.80px;">Exit Signal</div>
<div style="position:absolute;top:300.90px;white-space:pre;line-height:20.00px;color:#000;letter-spacing:-1.155px;left:1648.40px;">Tag</div>
<div style="position:absolute;top:300.90px;white-space:pre;line-height:20.00px;color:#000;letter-spacing:-1.480px;left:1746.00px;">MFEPct</div>
<div style="position:absolute;top:300.90px;white-space:pre;line-height:20.00px;color:#000;left:1878.70px;">MAEPct</div>
<div style="position:absolute;top:334.30px;white-space:pre;line-height:20.00px;color:#000;letter-spacing:0.423px;left:51.30px;">Long</div>
<div style="position:absolute;top:334.30px;white-space:pre;line-height:20.00px;color:#000;letter-spacing:-1.798px;left:115.00px;">MSFT</div>
<div style="position:absolute;top:334.30px;white-space:pre;line-height:20.00px;color:#000;left:333.49px;">37</div>
<div style="position:absolute;top:334.30px;white-space:pre;line-height:20.00px;color:#000;left:454.16px;">27.11.2023</div>
<div style="position:absolute;top:334.30px;white-space:pre;line-height:20.00px;color:#000;left:607.76px;">376,97</div>
<div style="position:absolute;top:334.30px;white-space:pre;line-height:20.00px;color:#000;left:799.62px;">04.12.2023</div>
<div style="position:absolute;top:334.30px;white-space:pre;line-height:20.00px;color:#000;left:954.96px;">369,00</div>
<div style="position:absolute;top:334.30px;white-space:pre;line-height:20.00px;color:#FF0000;left:1068.96px;">-294.89</div>
<div style="position:absolute;top:334.30px;white-space:pre;line-height:20.00px;color:#FF0000;left:1209.72px;">-2.11</div>
<div style="position:absolute;top:334.30px;white-space:pre;line-height:20.00px;color:#000;left:1360.00px;">5</div>
<div style="position:absolute;top:334.30px;white-space:pre;line-height:20.00px;color:#008000;left:1800.18px;">1.94</div>
<div style="position:absolute;top:369.30px;white-space:pre;line-height:20.00px;color:#000;letter-spacing:0.423px;left:51.30px;">Long</div>
<div style="position:absolute;top:369.30px;white-space:pre;line-height:20.00px;color:#000;letter-spacing:-1.473px;left:116.00px;">AAPL</div>
<div style="position:absolute;top:369.30px;white-space:pre;line-height:20.00px;color:#000;left:333.49px;">73</div>
<div style="position:absolute;top:369.30px;white-space:pre;line-height:20.00px;color:#000;left:452.82px;">04.12.2023</div>
<div style="position:absolute;top:369.30px;white-space:pre;line-height:20.00px;color:#000;left:607.76px;">190,00</div>
<div style="position:absolute;top:369.30px;white-space:pre;line-height:20.00px;color:#000;left:799.62px;">19.12.2023</div>
<div style="position:absolute;top:369.30px;white-space:pre;line-height:20.00px;color:#000;left:954.96px;">196,08</div>
<div style="position:absolute;top:369.30px;white-space:pre;line-height:20.00px;color:#008000;left:1074.96px;">443.84</div>
<div style="position:absolute;top:369.30px;white-space:pre;line-height:20.00px;color:#008000;left:1214.38px;">3.20</div>
<div style="position:absolute;top:369.30px;white-space:pre;line-height:20.00px;color:#000;left:1351.33px;">11</div>
<div style="position:absolute;top:369.30px;white-space:pre;line-height:20.00px;color:#008000;left:1800.18px;">5.06</div>
<div style="position:absolute;top:405.30px;white-space:pre;line-height:20.00px;color:#000;letter-spacing:0.423px;left:51.30px;">Long</div>
<div style="position:absolute;top:405.30px;white-space:pre;line-height:20.00px;color:#000;letter-spacing:0.035px;left:116.00px;">AMZN</div>
<div style="position:absolute;top:405.30px;white-space:pre;line-height:20.00px;color:#000;left:333.49px;">93</div>
<div style="position:absolute;top:405.30px;white-space:pre;line-height:20.00px;color:#000;left:452.82px;">19.12.2023</div>
<div style="position:absolute;top:405.30px;white-space:pre;line-height:20.00px;color:#000;left:607.76px;">154,43</div>
<div style="position:absolute;top:405.30px;white-space:pre;line-height:20.00px;color:#000;left:799.62px;">26.12.2023</div>
<div style="position:absolute;top:405.30px;white-space:pre;line-height:20.00px;color:#000;left:954.96px;">153,48</div>
<div style="position:absolute;top:405.30px;white-space:pre;line-height:20.00px;color:#FF0000;left:1078.97px;">-88.35</div>
<div style="position:absolute;top:405.30px;white-space:pre;line-height:20.00px;color:#FF0000;left:1208.38px;">-0.62</div>
<div style="position:absolute;top:405.30px;white-space:pre;line-height:20.00px;color:#000;left:1360.00px;">4</div>
<div style="position:absolute;top:405.30px;white-space:pre;line-height:20.00px;color:#008000;left:1800.18px;">0.78</div>
<div style="position:absolute;top:440.30px;white-space:pre;line-height:20.00px;color:#000;letter-spacing:0.423px;left:51.30px;">Long</div>
<div style="position:absolute;top:440.30px;white-space:pre;line-height:20.00px;color:#000;letter-spacing:-1.651px;left:116.00px;">GOOGL</div>
<div style="position:absolute;top:440.30px;white-space:pre;line-height:20.00px;color:#000;left:323.48px;">101</div>
<div style="position:absolute;top:440.30px;white-space:pre;line-height:20.00px;color:#000;left:452.82px;">26.12.2023</div>
<div style="position:absolute;top:440.30px;white-space:pre;line-height:20.00px;color:#000;left:607.76px;">141,64</div>
<div style="position:absolute;top:440.30px;white-space:pre;line-height:20.00px;color:#000;left:799.62px;">28.12.2023</div>
<div style="position:absolute;top:440.30px;white-space:pre;line-height:20.00px;color:#000;left:954.96px;">140,67</div>
<div style="position:absolute;top:440.30px;white-space:pre;line-height:20.00px;color:#FF0000;left:1078.97px;">-97.97</div>
<div style="position:absolute;top:440.30px;white-space:pre;line-height:20.00px;color:#FF0000;left:1208.38px;">-0.68</div>
<div style="position:absolute;top:440.30px;white-space:pre;line-height:20.00px;color:#000;left:1360.00px;">2</div>
<div style="position:absolute;top:440.30px;white-space:pre;line-height:20.00px;color:#008000;left:1800.18px;">0.73</div>
<div style="position:absolute;top:476.30px;white-space:pre;line-height:20.00px;color:#000;letter-spacing:0.423px;left:51.30px;">Long</div>
<div style="position:absolute;top:476.30px;white-space:pre;line-height:20.00px;color:#000;letter-spacing:0.035px;left:116.00px;">AMZN</div>
<div style="position:absolute;top:476.30px;white-space:pre;line-height:20.00px;color:#000;left:333.49px;">92</div>
<div style="position:absolute;top:476.30px;white-space:pre;line-height:20.00px;color:#000;left:452.82px;">28.12.2023</div>
<div style="position:absolute;top:476.30px;white-space:pre;line-height:20.00px;color:#000;left:607.76px;">153,65</div>
<div style="position:absolute;top:476.30px;white-space:pre;line-height:20.00px;color:#000;left:799.62px;">02.01.2024</div>
<div style="position:absolute;top:476.30px;white-space:pre;line-height:20.00px;color:#000;left:954.96px;">151,64</div>
<div style="position:absolute;top:476.30px;white-space:pre;line-height:20.00px;color:#FF0000;left:1068.96px;">-184.92</div>
<div style="position:absolute;top:476.30px;white-space:pre;line-height:20.00px;color:#FF0000;left:1208.38px;">-1.31</div>
<div style="position:absolute;top:476.30px;white-space:pre;line-height:20.00px;color:#000;left:1360.00px;">2</div>
<div style="position:absolute;top:476.30px;white-space:pre;line-height:20.00px;color:#008000;left:1800.18px;">0.28</div>
<div style="position:absolute;top:511.30px;white-space:pre;line-height:20.00px;color:#000;letter-spacing:0.423px;left:51.30px;">Long</div>
<div style="position:absolute;top:511.30px;white-space:pre;line-height:20.00px;color:#000;letter-spacing:-1.651px;left:116.00px;">GOOGL</div>
<div style="position:absolute;top:511.30px;white-space:pre;line-height:20.00px;color:#000;left:323.48px;">100</div>
<div style="position:absolute;top:511.30px;white-space:pre;line-height:20.00px;color:#000;left:452.82px;">02.01.2024</div>
<div style="position:absolute;top:511.30px;white-space:pre;line-height:20.00px;color:#000;left:607.76px;">138,66</div>
<div style="position:absolute;top:511.30px;white-space:pre;line-height:20.00px;color:#000;left:800.96px;">11.01.2024</div>
<div style="position:absolute;top:511.30px;white-space:pre;line-height:20.00px;color:#000;left:954.96px;">143,48</div>
<div style="position:absolute;top:511.30px;white-space:pre;line-height:20.00px;color:#008000;left:1074.96px;">482.00</div>
<div style="position:absolute;top:511.30px;white-space:pre;line-height:20.00px;color:#008000;left:1214.38px;">3.48</div>
<div style="position:absolute;top:511.30px;white-space:pre;line-height:20.00px;color:#000;left:1360.00px;">7</div>
<div style="position:absolute;top:511.30px;white-space:pre;line-height:20.00px;color:#008000;left:1800.18px;">3.48</div>
<div style="position:absolute;top:547.30px;white-space:pre;line-height:20.00px;color:#000;letter-spacing:0.423px;left:51.30px;">Long</div>
<div style="position:absolute;top:547.30px;white-space:pre;line-height:20.00px;color:#000;letter-spacing:-1.798px;left:115.00px;">MSFT</div>
<div style="position:absolute;top:547.30px;white-space:pre;line-height:20.00px;color:#000;left:333.49px;">37</div>
<div style="position:absolute;top:547.30px;white-space:pre;line-height:20.00px;color:#000;left:454.16px;">11.01.2024</div>
<div style="position:absolute;top:547.30px;white-space:pre;line-height:20.00px;color:#000;left:607.76px;">385,99</div>
<div style="position:absolute;top:547.30px;white-space:pre;line-height:20.00px;color:#000;left:799.62px;">29.01.2024</div>
<div style="position:absolute;top:547.30px;white-space:pre;line-height:20.00px;color:#000;left:954.96px;">405,80</div>
<div style="position:absolute;top:547.30px;white-space:pre;line-height:20.00px;color:#008000;left:1074.96px;">732.97</div>
<div style="position:absolute;top:547.30px;white-space:pre;line-height:20.00px;color:#008000;left:1214.38px;">5.13</div>
<div style="position:absolute;top:547.30px;white-space:pre;line-height:20.00px;color:#000;left:1351.33px;">11</div>
<div style="position:absolute;top:547.30px;white-space:pre;line-height:20.00px;color:#008000;left:1800.18px;">5.45</div>
<div style="position:absolute;top:582.30px;white-space:pre;line-height:20.00px;color:#000;letter-spacing:0.423px;left:51.30px;">Long</div>
<div style="position:absolute;top:582.30px;white-space:pre;line-height:20.00px;color:#000;letter-spacing:-1.651px;left:116.00px;">GOOGL</div>
<div style="position:absolute;top:582.30px;white-space:pre;line-height:20.00px;color:#000;left:333.49px;">99</div>
<div style="position:absolute;top:582.30px;white-space:pre;line-height:20.00px;color:#000;left:452.82px;">29.01.2024</div>
<div style="position:absolute;top:582.30px;white-space:pre;line-height:20.00px;color:#000;left:607.76px;">152,03</div>
<div style="position:absolute;top:582.30px;white-space:pre;line-height:20.00px;color:#000;left:799.62px;">30.01.2024</div>
<div style="position:absolute;top:582.30px;white-space:pre;line-height:20.00px;color:#000;left:954.96px;">152,75</div>
<div style="position:absolute;top:582.30px;white-space:pre;line-height:20.00px;color:#008000;left:1084.97px;">71.28</div>
<div style="position:absolute;top:582.30px;white-space:pre;line-height:20.00px;color:#008000;left:1214.38px;">0.47</div>
<div style="position:absolute;top:582.30px;white-space:pre;line-height:20.00px;color:#000;left:1360.00px;">1</div>
<div style="position:absolute;top:582.30px;white-space:pre;line-height:20.00px;color:#008000;left:1800.18px;">1.15</div>
<div style="position:absolute;top:618.30px;white-space:pre;line-height:20.00px;color:#000;letter-spacing:0.423px;left:51.30px;">Long</div>
<div style="position:absolute;top:618.30px;white-space:pre;line-height:20.00px;color:#000;letter-spacing:-1.798px;left:115.00px;">MSFT</div>
<div style="position:absolute;top:618.30px;white-space:pre;line-height:20.00px;color:#000;left:333.49px;">37</div>
<div style="position:absolute;top:618.30px;white-space:pre;line-height:20.00px;color:#000;left:452.82px;">30.01.2024</div>
<div style="position:absolute;top:618.30px;white-space:pre;line-height:20.00px;color:#000;left:607.76px;">412,15</div>
<div style="position:absolute;top:618.30px;white-space:pre;line-height:20.00px;color:#000;left:799.62px;">05.02.2024</div>
<div style="position:absolute;top:618.30px;white-space:pre;line-height:20.00px;color:#000;left:954.96px;">409,56</div>
<div style="position:absolute;top:618.30px;white-space:pre;line-height:20.00px;color:#FF0000;left:1078.97px;">-95.83</div>
<div style="position:absolute;top:618.30px;white-space:pre;line-height:20.00px;color:#FF0000;left:1208.38px;">-0.63</div>
<div style="position:absolute;top:618.30px;white-space:pre;line-height:20.00px;color:#000;left:1360.00px;">4</div>
<div style="position:absolute;top:618.30px;white-space:pre;line-height:20.00px;color:#008000;left:1800.18px;">0.77</div>
<div style="position:absolute;top:653.30px;white-space:pre;line-height:20.00px;color:#000;letter-spacing:0.423px;left:51.30px;">Long</div>
<div style="position:absolute;top:653.30px;white-space:pre;line-height:20.00px;color:#000;letter-spacing:0.035px;left:116.00px;">AMZN</div>
<div style="position:absolute;top:653.30px;white-space:pre;line-height:20.00px;color:#000;left:333.49px;">88</div>
<div style="position:absolute;top:653.30px;white-space:pre;line-height:20.00px;color:#000;left:452.82px;">05.02.2024</div>
<div style="position:absolute;top:653.30px;white-space:pre;line-height:20.00px;color:#000;left:607.76px;">170,00</div>
<div style="position:absolute;top:653.30px;white-space:pre;line-height:20.00px;color:#000;left:799.62px;">13.03.2024</div>
<div style="position:absolute;top:653.30px;white-space:pre;line-height:20.00px;color:#000;left:954.96px;">175,91</div>
<div style="position:absolute;top:653.30px;white-space:pre;line-height:20.00px;color:#008000;left:1074.96px;">520.08</div>
<div style="position:absolute;top:653.30px;white-space:pre;line-height:20.00px;color:#008000;left:1214.38px;">3.48</div>
<div style="position:absolute;top:653.30px;white-space:pre;line-height:20.00px;color:#000;left:1349.99px;">26</div>
<div style="position:absolute;top:653.30px;white-space:pre;line-height:20.00px;color:#008000;left:1800.18px;">5.96</div>
<div style="position:absolute;top:689.30px;white-space:pre;line-height:20.00px;color:#000;letter-spacing:0.423px;left:51.30px;">Long</div>
<div style="position:absolute;top:689.30px;white-space:pre;line-height:20.00px;color:#000;letter-spacing:-1.798px;left:115.00px;">MSFT</div>
<div style="position:absolute;top:689.30px;white-space:pre;line-height:20.00px;color:#000;left:333.49px;">37</div>
<div style="position:absolute;top:689.30px;white-space:pre;line-height:20.00px;color:#000;left:452.82px;">13.03.2024</div>
<div style="position:absolute;top:689.30px;white-space:pre;line-height:20.00px;color:#000;left:607.76px;">418,00</div>
<div style="position:absolute;top:689.30px;white-space:pre;line-height:20.00px;color:#000;left:799.62px;">14.03.2024</div>
<div style="position:absolute;top:689.30px;white-space:pre;line-height:20.00px;color:#000;left:954.96px;">420,00</div>
<div style="position:absolute;top:689.30px;white-space:pre;line-height:20.00px;color:#008000;left:1084.97px;">74.00</div>
<div style="position:absolute;top:689.30px;white-space:pre;line-height:20.00px;color:#008000;left:1214.38px;">0.48</div>
<div style="position:absolute;top:689.30px;white-space:pre;line-height:20.00px;color:#000;left:1360.00px;">1</div>
<div style="position:absolute;top:689.30px;white-space:pre;line-height:20.00px;color:#008000;left:1800.18px;">0.48</div>
<div style="position:absolute;top:724.30px;white-space:pre;line-height:20.00px;color:#000;letter-spacing:0.423px;left:51.30px;">Long</div>
<div style="position:absolute;top:724.30px;white-space:pre;line-height:20.00px;color:#000;letter-spacing:0.035px;left:116.00px;">AMZN</div>
<div style="position:absolute;top:724.30px;white-space:pre;line-height:20.00px;color:#000;left:333.49px;">88</div>
<div style="position:absolute;top:724.30px;white-space:pre;line-height:20.00px;color:#000;left:452.82px;">14.03.2024</div>
<div style="position:absolute;top:724.30px;white-space:pre;line-height:20.00px;color:#000;left:607.76px;">177,76</div>
<div style="position:absolute;top:724.30px;white-space:pre;line-height:20.00px;color:#000;left:799.62px;">15.03.2024</div>
<div style="position:absolute;top:724.30px;white-space:pre;line-height:20.00px;color:#000;left:954.96px;">176,64</div>
<div style="position:absolute;top:724.30px;white-space:pre;line-height:20.00px;color:#FF0000;left:1078.97px;">-98.56</div>
<div style="position:absolute;top:724.30px;white-space:pre;line-height:20.00px;color:#FF0000;left:1208.38px;">-0.63</div>
<div style="position:absolute;top:724.30px;white-space:pre;line-height:20.00px;color:#000;left:1360.00px;">1</div>
<div style="position:absolute;top:724.30px;white-space:pre;line-height:20.00px;color:#008000;left:1800.18px;">1.00</div>
<div style="position:absolute;top:760.30px;white-space:pre;line-height:20.00px;color:#000;letter-spacing:0.423px;left:51.30px;">Long</div>
<div style="position:absolute;top:760.30px;white-space:pre;line-height:20.00px;color:#000;letter-spacing:-1.798px;left:115.00px;">MSFT</div>
<div style="position:absolute;top:760.30px;white-space:pre;line-height:20.00px;color:#000;left:333.49px;">37</div>
<div style="position:absolute;top:760.30px;white-space:pre;line-height:20.00px;color:#000;left:452.82px;">15.03.2024</div>
<div style="position:absolute;top:760.30px;white-space:pre;line-height:20.00px;color:#000;left:607.76px;">418,99</div>
<div style="position:absolute;top:760.30px;white-space:pre;line-height:20.00px;color:#000;left:799.62px;">19.03.2024</div>
<div style="position:absolute;top:760.30px;white-space:pre;line-height:20.00px;color:#000;left:954.96px;">418,04</div>
<div style="position:absolute;top:760.30px;white-space:pre;line-height:20.00px;color:#FF0000;left:1078.97px;">-35.15</div>
<div style="position:absolute;top:760.30px;white-space:pre;line-height:20.00px;color:#FF0000;left:1208.38px;">-0.23</div>
<div style="position:absolute;top:760.30px;white-space:pre;line-height:20.00px;color:#000;left:1360.00px;">2</div>
<div style="position:absolute;top:760.30px;white-space:pre;line-height:20.00px;color:#008000;left:1800.18px;">0.86</div>
<div style="position:absolute;top:795.30px;white-space:pre;line-height:20.00px;color:#000;letter-spacing:0.423px;left:51.30px;">Long</div>
<div style="position:absolute;top:795.30px;white-space:pre;line-height:20.00px;color:#000;letter-spacing:-1.651px;left:116.00px;">GOOGL</div>
<div style="position:absolute;top:795.30px;white-space:pre;line-height:20.00px;color:#000;left:323.48px;">105</div>
<div style="position:absolute;top:795.30px;white-space:pre;line-height:20.00px;color:#000;left:452.82px;">19.03.2024</div>
<div style="position:absolute;top:795.30px;white-space:pre;line-height:20.00px;color:#000;left:607.76px;">148,24</div>
<div style="position:absolute;top:795.30px;white-space:pre;line-height:20.00px;color:#000;left:799.62px;">22.03.2024</div>
<div style="position:absolute;top:795.30px;white-space:pre;line-height:20.00px;color:#000;left:954.96px;">149,15</div>
<div style="position:absolute;top:795.30px;white-space:pre;line-height:20.00px;color:#008000;left:1084.97px;">95.55</div>
<div style="position:absolute;top:795.30px;white-space:pre;line-height:20.00px;color:#008000;left:1214.38px;">0.61</div>
<div style="position:absolute;top:795.30px;white-space:pre;line-height:20.00px;color:#000;left:1360.00px;">3</div>
<div style="position:absolute;top:795.30px;white-space:pre;line-height:20.00px;color:#008000;left:1800.18px;">1.44</div>
<div style="position:absolute;top:831.30px;white-space:pre;line-height:20.00px;color:#000;letter-spacing:0.423px;left:51.30px;">Long</div>
<div style="position:absolute;top:831.30px;white-space:pre;line-height:20.00px;color:#000;letter-spacing:-1.798px;left:115.00px;">MSFT</div>
<div style="position:absolute;top:831.30px;white-space:pre;line-height:20.00px;color:#000;left:333.49px;">36</div>
<div style="position:absolute;top:831.30px;white-space:pre;line-height:20.00px;color:#000;left:452.82px;">22.03.2024</div>
<div style="position:absolute;top:831.30px;white-space:pre;line-height:20.00px;color:#000;left:607.76px;">429,69</div>
<div style="position:absolute;top:831.30px;white-space:pre;line-height:20.00px;color:#000;left:799.62px;">25.03.2024</div>
<div style="position:absolute;top:831.30px;white-space:pre;line-height:20.00px;color:#000;left:954.96px;">425,13</div>
<div style="position:absolute;top:831.30px;white-space:pre;line-height:20.00px;color:#FF0000;left:1068.96px;">-164.16</div>
<div style="position:absolute;top:831.30px;white-space:pre;line-height:20.00px;color:#FF0000;left:1208.38px;">-1.06</div>
<div style="position:absolute;top:831.30px;white-space:pre;line-height:20.00px;color:#000;left:1360.00px;">1</div>
<div style="position:absolute;top:831.30px;white-space:pre;line-height:20.00px;color:#008000;left:1800.18px;">0.04</div>
<div style="position:absolute;top:866.30px;white-space:pre;line-height:20.00px;color:#000;letter-spacing:0.423px;left:51.30px;">Long</div>
<div style="position:absolute;top:866.30px;white-space:pre;line-height:20.00px;color:#000;letter-spacing:-1.651px;left:116.00px;">GOOGL</div>
<div style="position:absolute;top:866.30px;white-space:pre;line-height:20.00px;color:#000;left:323.48px;">104</div>
<div style="position:absolute;top:866.30px;white-space:pre;line-height:20.00px;color:#000;left:452.82px;">25.03.2024</div>
<div style="position:absolute;top:866.30px;white-space:pre;line-height:20.00px;color:#000;left:607.76px;">150,00</div>
<div style="position:absolute;top:866.30px;white-space:pre;line-height:20.00px;color:#000;left:799.62px;">05.04.2024</div>
<div style="position:absolute;top:866.30px;white-space:pre;line-height:20.00px;color:#000;left:954.96px;">149,93</div>
<div style="position:absolute;top:866.30px;white-space:pre;line-height:20.00px;color:#FF0000;left:1088.98px;">-7.28</div>
<div style="position:absolute;top:866.30px;white-space:pre;line-height:20.00px;color:#FF0000;left:1208.38px;">-0.05</div>
<div style="position:absolute;top:866.30px;white-space:pre;line-height:20.00px;color:#000;left:1360.00px;">8</div>
<div style="position:absolute;top:866.30px;white-space:pre;line-height:20.00px;color:#008000;left:1800.18px;">3.83</div>
<div style="position:absolute;top:902.30px;white-space:pre;line-height:20.00px;color:#000;letter-spacing:0.423px;left:51.30px;">Long</div>
<div style="position:absolute;top:902.30px;white-space:pre;line-height:20.00px;color:#000;letter-spacing:0.035px;left:116.00px;">AMZN</div>
<div style="position:absolute;top:902.30px;white-space:pre;line-height:20.00px;color:#000;left:333.49px;">86</div>
<div style="position:absolute;top:902.30px;white-space:pre;line-height:20.00px;color:#000;left:452.82px;">05.04.2024</div>
<div style="position:absolute;top:902.30px;white-space:pre;line-height:20.00px;color:#000;left:607.76px;">182,53</div>
<div style="position:absolute;top:902.30px;white-space:pre;line-height:20.00px;color:#000;left:799.62px;">15.04.2024</div>
<div style="position:absolute;top:902.30px;white-space:pre;line-height:20.00px;color:#000;left:954.96px;">187,37</div>
<div style="position:absolute;top:902.30px;white-space:pre;line-height:20.00px;color:#008000;left:1074.96px;">416.24</div>
<div style="position:absolute;top:902.30px;white-space:pre;line-height:20.00px;color:#008000;left:1214.38px;">2.65</div>
<div style="position:absolute;top:902.30px;white-space:pre;line-height:20.00px;color:#000;left:1360.00px;">6</div>
<div style="position:absolute;top:902.30px;white-space:pre;line-height:20.00px;color:#008000;left:1800.18px;">3.97</div>
<div style="position:absolute;top:937.30px;white-space:pre;line-height:20.00px;color:#000;letter-spacing:0.423px;left:51.30px;">Long</div>
<div style="position:absolute;top:937.30px;white-space:pre;line-height:20.00px;color:#000;letter-spacing:-1.651px;left:116.00px;">GOOGL</div>
<div style="position:absolute;top:937.30px;white-space:pre;line-height:20.00px;color:#000;left:323.48px;">100</div>
<div style="position:absolute;top:937.30px;white-space:pre;line-height:20.00px;color:#000;left:452.82px;">15.04.2024</div>
<div style="position:absolute;top:937.30px;white-space:pre;line-height:20.00px;color:#000;left:607.76px;">158,88</div>
<div style="position:absolute;top:937.30px;white-space:pre;line-height:20.00px;color:#000;left:799.62px;">06.05.2024</div>
<div style="position:absolute;top:937.30px;white-space:pre;line-height:20.00px;color:#000;left:954.96px;">167,48</div>
<div style="position:absolute;top:937.30px;white-space:pre;line-height:20.00px;color:#008000;left:1074.96px;">860.00</div>
<div style="position:absolute;top:937.30px;white-space:pre;line-height:20.00px;color:#008000;left:1214.38px;">5.41</div>
<div style="position:absolute;top:937.30px;white-space:pre;line-height:20.00px;color:#000;left:1349.99px;">15</div>
<div style="position:absolute;top:937.30px;white-space:pre;line-height:20.00px;color:#008000;left:1800.18px;">9.96</div>
<div style="position:absolute;top:973.30px;white-space:pre;line-height:20.00px;color:#000;letter-spacing:0.423px;left:51.30px;">Long</div>
<div style="position:absolute;top:973.30px;white-space:pre;line-height:20.00px;color:#000;letter-spacing:-1.473px;left:116.00px;">AAPL</div>
<div style="position:absolute;top:973.30px;white-space:pre;line-height:20.00px;color:#000;left:333.49px;">91</div>
<div style="position:absolute;top:973.30px;white-space:pre;line-height:20.00px;color:#000;left:452.82px;">06.05.2024</div>
<div style="position:absolute;top:973.30px;white-space:pre;line-height:20.00px;color:#000;left:607.76px;">182,28</div>
<div style="position:absolute;top:973.30px;white-space:pre;line-height:20.00px;color:#000;left:799.62px;">07.05.2024</div>
<div style="position:absolute;top:973.30px;white-space:pre;line-height:20.00px;color:#000;left:954.96px;">183,49</div>
<div style="position:absolute;top:973.30px;white-space:pre;line-height:20.00px;color:#008000;left:1077.63px;">110.11</div>
<div style="position:absolute;top:973.30px;white-space:pre;line-height:20.00px;color:#008000;left:1214.38px;">0.66</div>
<div style="position:absolute;top:973.30px;white-space:pre;line-height:20.00px;color:#000;left:1360.00px;">1</div>
<div style="position:absolute;top:973.30px;white-space:pre;line-height:20.00px;color:#008000;left:1800.18px;">1.05</div>
<div style="position:absolute;top:1008.30px;white-space:pre;line-height:20.00px;color:#000;letter-spacing:0.423px;left:51.30px;">Long</div>
<div style="position:absolute;top:1008.30px;white-space:pre;line-height:20.00px;color:#000;letter-spacing:-1.651px;left:116.00px;">GOOGL</div>
<div style="position:absolute;top:1008.30px;white-space:pre;line-height:20.00px;color:#000;left:323.48px;">100</div>
<div style="position:absolute;top:1008.30px;white-space:pre;line-height:20.00px;color:#000;left:452.82px;">07.05.2024</div>
<div style="position:absolute;top:1008.30px;white-space:pre;line-height:20.00px;color:#000;left:607.76px;">168,44</div>
<div style="position:absolute;top:1008.30px;white-space:pre;line-height:20.00px;color:#000;left:799.62px;">09.05.2024</div>
<div style="position:absolute;top:1008.30px;white-space:pre;line-height:20.00px;color:#000;left:954.96px;">169,58</div>
<div style="position:absolute;top:1008.30px;white-space:pre;line-height:20.00px;color:#008000;left:1076.29px;">114.00</div>
<div style="position:absolute;top:1008.30px;white-space:pre;line-height:20.00px;color:#008000;left:1214.38px;">0.68</div>
<div style="position:absolute;top:1008.30px;white-space:pre;line-height:20.00px;color:#000;left:1360.00px;">2</div>
<div style="position:absolute;top:1008.30px;white-space:pre;line-height:20.00px;color:#008000;left:1800.18px;">1.97</div>
<div style="position:absolute;top:1044.30px;white-space:pre;line-height:20.00px;color:#000;letter-spacing:0.423px;left:51.30px;">Long</div>
<div style="position:absolute;top:1044.30px;white-space:pre;line-height:20.00px;color:#000;letter-spacing:-1.473px;left:116.00px;">AAPL</div>
<div style="position:absolute;top:1044.30px;white-space:pre;line-height:20.00px;color:#000;left:333.49px;">93</div>
<div style="position:absolute;top:1044.30px;white-space:pre;line-height:20.00px;color:#000;left:452.82px;">09.05.2024</div>
<div style="position:absolute;top:1044.30px;white-space:pre;line-height:20.00px;color:#000;left:607.76px;">182,50</div>
<div style="position:absolute;top:1044.30px;white-space:pre;line-height:20.00px;color:#000;left:799.62px;">24.05.2024</div>
<div style="position:absolute;top:1044.30px;white-space:pre;line-height:20.00px;color:#000;left:954.96px;">188,82</div>
<div style="position:absolute;top:1044.30px;white-space:pre;line-height:20.00px;color:#008000;left:1074.96px;">587.76</div>
<div style="position:absolute;top:1044.30px;white-space:pre;line-height:20.00px;color:#008000;left:1214.38px;">3.46</div>
<div style="position:absolute;top:1044.30px;white-space:pre;line-height:20.00px;color:#000;left:1351.33px;">11</div>
<div style="position:absolute;top:1044.30px;white-space:pre;line-height:20.00px;color:#008000;left:1800.18px;">5.66</div>
<div style="position:absolute;top:1079.30px;white-space:pre;line-height:20.00px;color:#000;letter-spacing:0.423px;left:51.30px;">Long</div>
<div style="position:absolute;top:1079.30px;white-space:pre;line-height:20.00px;color:#000;letter-spacing:-1.651px;left:116.00px;">GOOGL</div>
<div style="position:absolute;top:1079.30px;white-space:pre;line-height:20.00px;color:#000;left:323.48px;">100</div>
<div style="position:absolute;top:1079.30px;white-space:pre;line-height:20.00px;color:#000;left:452.82px;">24.05.2024</div>
<div style="position:absolute;top:1079.30px;white-space:pre;line-height:20.00px;color:#000;left:607.76px;">175,12</div>
<div style="position:absolute;top:1079.30px;white-space:pre;line-height:20.00px;color:#000;left:799.62px;">28.05.2024</div>
<div style="position:absolute;top:1079.30px;white-space:pre;line-height:20.00px;color:#000;left:954.96px;">174,57</div>
<div style="position:absolute;top:1079.30px;white-space:pre;line-height:20.00px;color:#FF0000;left:1078.97px;">-55.00</div>
<div style="position:absolute;top:1079.30px;white-space:pre;line-height:20.00px;color:#FF0000;left:1208.38px;">-0.31</div>
<div style="position:absolute;top:1079.30px;white-space:pre;line-height:20.00px;color:#000;left:1360.00px;">1</div>
<div style="position:absolute;top:1079.30px;white-space:pre;line-height:20.00px;color:#008000;left:1800.18px;">0.37</div>
<div style="position:absolute;top:1115.30px;white-space:pre;line-height:20.00px;color:#000;letter-spacing:0.423px;left:51.30px;">Long</div>
<div style="position:absolute;top:1115.30px;white-space:pre;line-height:20.00px;color:#000;letter-spacing:-1.473px;left:116.00px;">AAPL</div>
<div style="position:absolute;top:1115.30px;white-space:pre;line-height:20.00px;color:#000;left:333.49px;">92</div>
<div style="position:absolute;top:1115.30px;white-space:pre;line-height:20.00px;color:#000;left:452.82px;">28.05.2024</div>
<div style="position:absolute;top:1115.30px;white-space:pre;line-height:20.00px;color:#000;left:607.76px;">191,44</div>
<div style="position:absolute;top:1115.30px;white-space:pre;line-height:20.00px;color:#000;left:799.62px;">29.05.2024</div>
<div style="position:absolute;top:1115.30px;white-space:pre;line-height:20.00px;color:#000;left:954.96px;">189,51</div>
<div style="position:absolute;top:1115.30px;white-space:pre;line-height:20.00px;color:#FF0000;left:1068.96px;">-177.56</div>
<div style="position:absolute;top:1115.30px;white-space:pre;line-height:20.00px;color:#FF0000;left:1208.38px;">-1.01</div>
<div style="position:absolute;top:1115.30px;white-space:pre;line-height:20.00px;color:#000;left:1360.00px;">1</div>
<div style="position:absolute;top:1115.30px;white-space:pre;line-height:20.00px;color:#008000;left:1800.18px;">0.81</div>
<div style="position:absolute;top:1150.30px;white-space:pre;line-height:20.00px;color:#000;letter-spacing:0.423px;left:51.30px;">Long</div>
<div style="position:absolute;top:1150.30px;white-space:pre;line-height:20.00px;color:#000;letter-spacing:-1.651px;left:116.00px;">GOOGL</div>
<div style="position:absolute;top:1150.30px;white-space:pre;line-height:20.00px;color:#000;left:333.49px;">99</div>
<div style="position:absolute;top:1150.30px;white-space:pre;line-height:20.00px;color:#000;left:452.82px;">29.05.2024</div>
<div style="position:absolute;top:1150.30px;white-space:pre;line-height:20.00px;color:#000;left:607.76px;">175,34</div>
<div style="position:absolute;top:1150.30px;white-space:pre;line-height:20.00px;color:#000;left:799.62px;">30.05.2024</div>
<div style="position:absolute;top:1150.30px;white-space:pre;line-height:20.00px;color:#000;left:954.96px;">175,20</div>
<div style="position:absolute;top:1150.30px;white-space:pre;line-height:20.00px;color:#FF0000;left:1078.97px;">-13.86</div>
<div style="position:absolute;top:1150.30px;white-space:pre;line-height:20.00px;color:#FF0000;left:1208.38px;">-0.08</div>
<div style="position:absolute;top:1150.30px;white-space:pre;line-height:20.00px;color:#000;left:1360.00px;">1</div>
<div style="position:absolute;top:1150.30px;white-space:pre;line-height:20.00px;color:#008000;left:1800.18px;">0.85</div>
<div style="position:absolute;top:1186.30px;white-space:pre;line-height:20.00px;color:#000;letter-spacing:0.423px;left:51.30px;">Long</div>
<div style="position:absolute;top:1186.30px;white-space:pre;line-height:20.00px;color:#000;letter-spacing:-1.473px;left:116.00px;">AAPL</div>
<div style="position:absolute;top:1186.30px;white-space:pre;line-height:20.00px;color:#000;left:333.49px;">91</div>
<div style="position:absolute;top:1186.30px;white-space:pre;line-height:20.00px;color:#000;left:452.82px;">30.05.2024</div>
<div style="position:absolute;top:1186.30px;white-space:pre;line-height:20.00px;color:#000;left:607.76px;">190,68</div>
<div style="position:absolute;top:1186.30px;white-space:pre;line-height:20.00px;color:#000;left:799.62px;">21.06.2024</div>
<div style="position:absolute;top:1186.30px;white-space:pre;line-height:20.00px;color:#000;left:954.96px;">210,31</div>
<div style="position:absolute;top:1186.30px;white-space:pre;line-height:20.00px;color:#008000;left:1059.94px;">1,786.33</div>
<div style="position:absolute;top:1186.30px;white-space:pre;line-height:20.00px;color:#008000;left:1204.37px;">10.29</div>
<div style="position:absolute;top:1186.30px;white-space:pre;line-height:20.00px;color:#000;left:1349.99px;">15</div>
<div style="position:absolute;top:1186.30px;white-space:pre;line-height:20.00px;color:#008000;left:1790.17px;">15.48</div>
<div style="position:absolute;top:1221.30px;white-space:pre;line-height:20.00px;color:#000;letter-spacing:0.423px;left:51.30px;">Long</div>
<div style="position:absolute;top:1221.30px;white-space:pre;line-height:20.00px;color:#000;letter-spacing:-1.798px;left:115.00px;">MSFT</div>
<div style="position:absolute;top:1221.30px;white-space:pre;line-height:20.00px;color:#000;left:333.49px;">42</div>
<div style="position:absolute;top:1221.30px;white-space:pre;line-height:20.00px;color:#000;left:452.82px;">21.06.2024</div>
<div style="position:absolute;top:1221.30px;white-space:pre;line-height:20.00px;color:#000;left:607.76px;">447,45</div>
<div style="position:absolute;top:1221.30px;white-space:pre;line-height:20.00px;color:#000;left:846.68px;">Open</div>
<div style="position:absolute;top:1221.30px;white-space:pre;line-height:20.00px;color:#000;left:966.98px;">Open</div>
<div style="position:absolute;top:1221.30px;white-space:pre;line-height:20.00px;color:#008000;left:1084.97px;">97.86</div>
<div style="position:absolute;top:1221.30px;white-space:pre;line-height:20.00px;color:#008000;left:1214.38px;">0.52</div>
<div style="position:absolute;top:1221.30px;white-space:pre;line-height:20.00px;color:#000;left:1360.00px;">1</div>
<div style="position:absolute;top:1221.30px;white-space:pre;line-height:20.00px;color:#008000;left:1800.18px;">0.70</div>
</div>
</body></html>
